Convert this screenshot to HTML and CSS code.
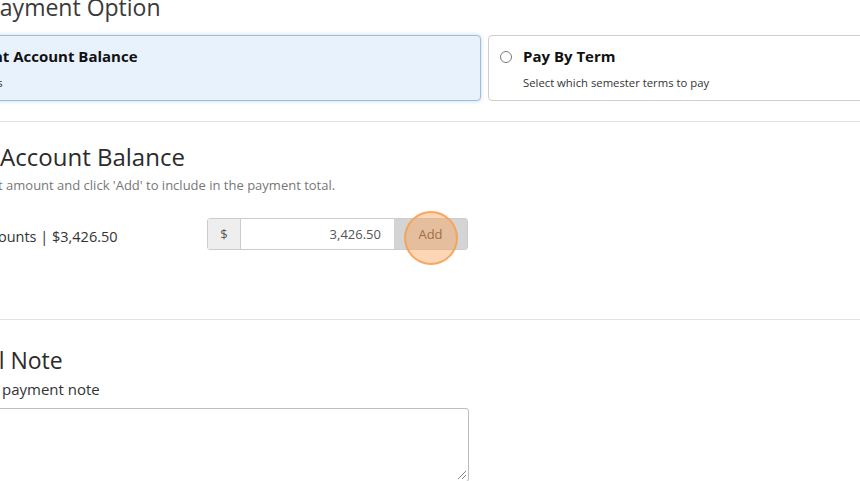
FILE: index.html
```html
<!DOCTYPE html>
<html lang="en">
<head>
<meta charset="utf-8">
<title>Payment Option</title>
<link rel="stylesheet" href="styles.css">
</head>
<body>
<div class="page">
  <h2 class="page-title">Payment Option</h2>
  <div class="options">
    <label class="option selected">
      <span class="radio checked"></span>
      <span class="option-body">
        <span class="option-title">Pay Student Account Balance</span>
        <span class="option-desc">Pay all accounts</span>
      </span>
    </label>
    <label class="option">
      <span class="radio"></span>
      <span class="option-body">
        <span class="option-title">Pay By Term</span>
        <span class="option-desc">Select which semester terms to pay</span>
      </span>
    </label>
  </div>

  <hr class="rule">

  <section class="section">
    <h3 class="section-title">Student Account Balance</h3>
    <p class="section-desc">Set a payment amount and click 'Add' to include in the payment total.</p>
    <div class="amount-row">
      <div class="amount-label">Student Accounts | $3,426.50</div>
      <div class="input-group">
        <span class="addon">$</span>
        <span class="amount-input">3,426.50</span>
        <span class="add-btn">Add<span class="click-ring"></span></span>
      </div>
    </div>
  </section>

  <hr class="rule rule-2">

  <section class="section">
    <h3 class="section-title note-title">Optional Note</h3>
    <p class="note-label">Enter a brief payment note</p>
    <div class="textarea"><span class="grip"></span></div>
  </section>
</div>
</body>
</html>
```

FILE: styles.css
```css
*, *::before, *::after {
  box-sizing: border-box;
}
html, body {
  margin: 0;
  padding: 0;
  background: #ffffff;
  overflow: hidden;
}
body {
  font-family: "Open Sans", "Noto Sans", "DejaVu Sans", sans-serif;
  color: #333333;
  width: 860px;
  height: 481px;
}
.page {
  margin-left: -84px;
  margin-top: -8px;
  width: 1200px;
}
.page-title {
  margin: 0 0 0 70px;
  font-size: 23px;
  font-weight: 400;
  line-height: 30px;
  color: #3a3a3a;
}
.options {
  margin-top: 13px;
  margin-left: -32px;
  display: grid;
  grid-template-columns: 597px 597px;
  gap: 7px;
}
.option {
  display: flex;
  align-items: flex-start;
  gap: 11px;
  height: 66px;
  border: 1px solid #cfcfcf;
  border-radius: 4px;
  padding: 0 0 0 11px;
  background: #fff;
}
.option.selected {
  background: #e8f2fd;
  border-color: #9fbcd8;
  box-shadow: 0 0 4px rgba(90, 140, 200, 0.35);
}
.radio {
  width: 12px;
  height: 12px;
  border: 1px solid #7a7a7a;
  border-radius: 50%;
  background: #fff;
  margin-top: 15px;
  flex: none;
}
.radio.checked {
  border-color: #2a72c8;
  background: radial-gradient(circle, #2a72c8 0 3px, #fff 3.5px);
}
.option-body {
  display: flex;
  flex-direction: column;
  padding-top: 10px;
}
.option-title {
  font-size: 15px;
  font-weight: 700;
  line-height: 20px;
  color: #111;
}
.option-desc {
  margin-top: 9px;
  font-size: 11.3px;
  line-height: 15px;
  color: #333;
}
.rule {
  border: 0;
  border-top: 1px solid #e2e2e2;
  margin: 20px 0 0;
}
.section {
  width: 553px;
}
.section-title {
  margin: 20px 0 0 -10px;
  font-size: 24px;
  font-weight: 500;
  line-height: 30px;
  color: #2b2b2b;
}
.section-desc {
  margin: 4px 0 0;
  font-size: 13px;
  line-height: 18px;
  color: #777;
}
.amount-row {
  margin-top: 24px;
  display: grid;
  grid-template-columns: 291px 261px;
  align-items: center;
}
.amount-label {
  font-size: 14.5px;
  color: #333;
  padding: 4px 0 0 2px;
}
.input-group {
  display: flex;
  height: 32px;
  border: 1px solid #cccccc;
  border-radius: 3px;
}
.addon {
  width: 33px;
  background: #eeeeee;
  border-right: 1px solid #cccccc;
  display: flex;
  align-items: center;
  justify-content: center;
  font-size: 13px;
  color: #555;
}
.amount-input {
  width: 153px;
  padding-right: 13px;
  background: #fff;
  display: flex;
  align-items: center;
  justify-content: flex-end;
  font-size: 13px;
  color: #555;
}
.add-btn {
  flex: 1;
  position: relative;
  background: #d4d4d4;
  display: flex;
  align-items: center;
  justify-content: center;
  font-size: 13px;
  color: #5a4030;
}
.click-ring {
  position: absolute;
  left: 50%;
  top: 50%;
  width: 54px;
  height: 54px;
  margin-left: -27px;
  margin-top: -23px;
  border-radius: 50%;
  border: 2px solid rgba(245, 160, 80, 0.85);
  background: rgba(248, 165, 90, 0.45);
}
.rule-2 {
  margin-top: 69px;
}
.note-title {
  margin-top: 25px;
  margin-left: -4px;
  font-size: 23px;
}
.note-label {
  margin: 4px 0 0 -4px;
  font-size: 15px;
  line-height: 20px;
  color: #333;
}
.textarea {
  position: relative;
  margin-top: 9px;
  height: 74px;
  border: 1px solid #bdbdbd;
  border-radius: 3px;
  width: 553px;
}
.grip {
  position: absolute;
  right: 2px;
  bottom: 2px;
  width: 8px;
  height: 8px;
  background: linear-gradient(135deg, transparent 45%, #888 45% 52%, transparent 52% 70%, #888 70% 77%, transparent 77%);
}
```
